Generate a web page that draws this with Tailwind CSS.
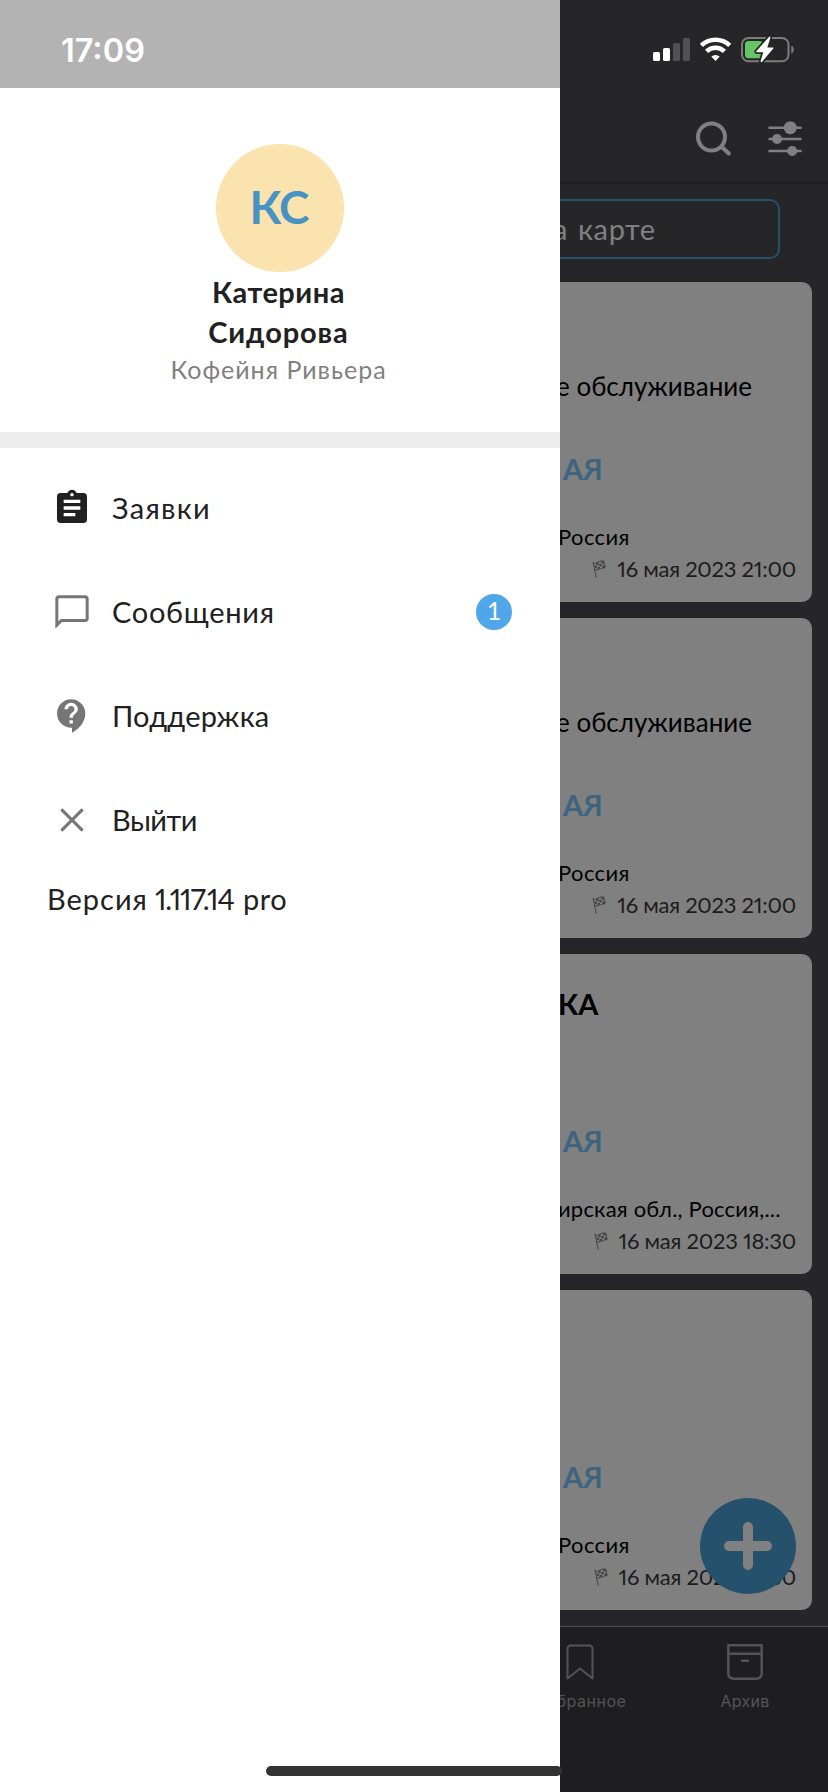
<!DOCTYPE html>
<html lang="ru">
<head>
<meta charset="utf-8">
<title>Меню</title>
<script src="https://cdn.jsdelivr.net/npm/@tailwindcss/browser@4"></script>
</head>
<body class="bg-[#262628]">
<svg class="hidden">
  <symbol id="flag" viewBox="0 0 14 18">
    <path d="M.9 1.6 4.3 17.4M1.2 3C4 4.6 7 .2 11.8 1l1.4 6.8C9 7.400 6 11.400 2.700 9.500" fill="none" stroke="#454545" stroke-width="1"/>
    <path d="M4 3.200l2.500-1 .5 2.200-2.500 1zM9 1.300l2.600-.1.5 2.200-2.500.1zM7 4.400l2.500-.9.5 2.200-2.500 1zM2.300 5.800l2.400-.5.5 2.200-2.300.6zM5.200 7.500l2.400-1 .4 1.800-2.500 1.200zM10 5.700l2.600-.1.5 2-2.600.1z" fill="#454545"/>
  </symbol>
</svg>
<div class="flex h-[1792px] w-[828px] overflow-hidden font-['Lato',sans-serif]">

  <!-- Drawer -->
  <aside class="flex w-[560px] shrink-0 flex-col bg-white text-[29px] text-[#212121]">
    <div class="flex h-[88px] items-center bg-[#b3b3b3] pt-3.5 pl-[61px] font-['Inter',sans-serif] text-[32.5px] font-semibold text-white">17:09</div>
    <div class="flex h-[344px] flex-col items-center pt-14">
      <div class="flex size-32 items-center justify-center rounded-full bg-[#fae3ae] pr-0.5 pb-[4px] text-[46px] font-bold tracking-[-1px] text-[#4893c4]">КС</div>
      <div class="pr-[3px] text-center leading-10 font-bold tracking-[0.5px]">Катерина<br><span class="tracking-[0.9px]">Сидорова</span></div>
      <div class="-mt-[3px] pr-[3px] text-[25px] leading-10 tracking-[1px] text-[#808080]">Кофейня Ривьера</div>
    </div>
    <div class="h-4 bg-[#ececec]"></div>
    <nav class="flex flex-col pt-2">
      <a class="flex h-[104px] items-center pl-[52px]">
        <svg class="size-10" viewBox="0 0 24 24" fill="#212121"><path d="M19 3h-4.180C14.400 1.840 13.300 1 12 1s-2.400.840-2.820 2H5c-1.100 0-2 .9-2 2v14c0 1.100.9 2 2 2h14c1.100 0 2-.9 2-2V5c0-1.100-.9-2-2-2zm-7 0c.550 0 1 .450 1 1s-.450 1-1 1-1-.450-1-1 .450-1 1-1zm2 14H7v-2h7v2zm3-4H7v-2h10v2zm0-4H7V7h10v2z"/></svg>
        <span class="ml-5 tracking-[1.3px]">Заявки</span>
      </a>
      <a class="flex h-[104px] items-center pr-12 pl-[52px]">
        <svg class="size-10" viewBox="0 0 24 24" fill="#767676"><path d="M20 2H4c-1.100 0-2 .9-2 2v18l4-4h14c1.100 0 2-.9 2-2V4c0-1.100-.9-2-2-2zm.2 14.200H5.300L3.800 17.700V4.400c0-.4.200-.6.600-.6h15.200c.4 0 .6.200.6.600z"/></svg>
        <span class="ml-5 tracking-[0.7px]">Сообщения</span>
        <span class="ml-auto flex size-9 items-center justify-center rounded-full bg-[#4fa6e8] pb-0.5 text-[25px] text-white">1</span>
      </a>
      <a class="flex h-[104px] items-center pl-[52px]">
        <svg class="size-10" viewBox="0 0 24 24" fill="#767676"><path d="M11.500 2C6.810 2 3 5.810 3 10.500S6.810 19 11.500 19h.5v3c4.860-2.340 8-7 8-11.500C20 5.810 16.190 2 11.500 2zm1 14.500h-2v-2h2v2zm0-3.500h-2c0-3.250 3-3 3-5 0-1.100-.9-2-2-2s-2 .9-2 2h-2c0-2.210 1.790-4 4-4s4 1.790 4 4c0 2.500-3 2.750-3 5z"/></svg>
        <span class="ml-5 tracking-[0.2px]">Поддержка</span>
      </a>
      <a class="flex h-[104px] items-center pl-[52px]">
        <svg class="size-10" viewBox="0 0 24 24" fill="none" stroke="#767676" stroke-width="1.800"><path d="M5.600 5.600 18.400 18.400M18.400 5.600 5.600 18.400"/></svg>
        <span class="ml-5 tracking-[-0.5px]">Выйти</span>
      </a>
    </nav>
    <div class="mt-[7px] flex pl-[47px] leading-10 whitespace-nowrap"><span class="tracking-[1px]">Версия</span><span class="ml-[7px] w-[82px] proportional-nums tracking-[-1.1px]">1.117.14</span><span class="ml-1.5 tracking-[0.5px]">pro</span></div>
    <div class="relative z-10 mt-auto mb-4 ml-[266px] h-2.5 w-[296px] shrink-0 rounded-full bg-[#333333]"></div>
  </aside>

  <!-- Dimmed application behind the drawer -->
  <main class="relative flex w-[268px] flex-col overflow-hidden text-black">
    <div class="flex h-[88px] shrink-0 pt-[36px] pl-[93px]">
      <svg class="h-[27px] w-[37px] shrink-0" viewBox="653 36 37 27"><g fill="#fff"><rect x="653" y="52" width="7" height="9" rx="1.500"/><rect x="663" y="48" width="7" height="13" rx="1.500"/></g><g fill="#515153"><rect x="673" y="43" width="7" height="18" rx="1.500"/><rect x="683" y="38" width="7" height="23" rx="1.500"/></g></svg>
      <svg class="ml-2.5 h-[27px] w-[32px] shrink-0" viewBox="700 36 32 27"><g fill="none" stroke="#fff" stroke-width="4.600"><path d="M701.300 45.400a20.500 20.500 0 0 1 28.400 0"/><path d="M706.600 51.400a12.800 12.800 0 0 1 17.800 0"/></g><path d="M715.500 61l-4.200-4.400a6.300 6.300 0 0 1 8.400 0z" fill="#fff"/></svg>
      <svg class="ml-[9px] h-[28px] w-[54px] shrink-0" viewBox="741 36 54 28"><rect x="742" y="38" width="46.500" height="23.300" rx="6.500" fill="none" stroke="#7c7c7d" stroke-width="2"/><rect x="745" y="41" width="18" height="17.300" rx="3.500" fill="#65c466"/><path d="M791.300 45.500c3.300 1.400 3.300 6.800 0 8.200z" fill="#7c7c7d"/><path d="M769.200 36.700 756.300 51.200c-.4.500-.2 1 .4 1h6.600l-2.700 8.700c-.3 1.200.7 1.700 1.500.8L773.300 48.600c.5-.6.200-1.200-.5-1.200h-5.500l3-9.500c.3-1.200-.4-1.900-1.100-1.200z" fill="#fff" stroke="#262628" stroke-width="3.500" paint-order="stroke"/></svg>
    </div>
    <header class="flex h-24 shrink-0 items-center border-b-2 border-[#1e1e20] pt-2 pl-[132px]">
      <svg class="size-[46px]" viewBox="692 116 46 46" fill="none" stroke="#808080" stroke-width="4"><circle cx="711.500" cy="137" r="13.500"/><path d="M722 147 728.800 153.500" stroke-linecap="round"/></svg>
      <svg class="ml-[30px] h-9 w-[34px]" viewBox="0 0 34 36"><path d="M1.500 6.700h31M1.500 18h31M1.500 30h31" stroke="#808080" stroke-width="2.500" stroke-linecap="round"/><g fill="#808080"><circle cx="22.300" cy="6.700" r="6.500"/><circle cx="9" cy="18" r="5"/><circle cx="24.200" cy="30" r="5"/></g></svg>
    </header>
    <div class="mt-[15px] mr-12 flex h-[60px] shrink-0 items-center rounded-r-[10px] border-2 border-l-0 border-[#25516f] text-[29px] tracking-[0.6px] text-[#808080]"><span class="-ml-[7px]">а</span><span class="ml-[10px]">карте</span></div>

    <div class="mt-[23px] flex flex-col gap-4 whitespace-nowrap proportional-nums">
      <article class="mr-4 flex h-80 flex-col rounded-r-[10px] bg-[#808080] pt-[84px] text-[22px]">
        <div class="-ml-1 h-10 text-[26px] leading-10">е обслуживание</div>
        <div class="mt-[43px] ml-[3px] h-10 text-[29px] leading-10 font-bold text-[#3e6480]">АЯ</div>
        <div class="mt-8 -ml-0.5 leading-8 tracking-[0.4px]">Россия</div>
        <div class="flex items-center justify-end pr-4 leading-8 tracking-[-0.25px] text-[#1c1c1c]"><svg class="mr-[11px] h-[18px] w-3.5"><use href="#flag"/></svg>16 мая 2023 21:00</div>
      </article>
      <article class="mr-4 flex h-80 flex-col rounded-r-[10px] bg-[#808080] pt-[84px] text-[22px]">
        <div class="-ml-1 h-10 text-[26px] leading-10">е обслуживание</div>
        <div class="mt-[43px] ml-[3px] h-10 text-[29px] leading-10 font-bold text-[#3e6480]">АЯ</div>
        <div class="mt-8 -ml-0.5 leading-8 tracking-[0.4px]">Россия</div>
        <div class="flex items-center justify-end pr-4 leading-8 tracking-[-0.25px] text-[#1c1c1c]"><svg class="mr-[11px] h-[18px] w-3.5"><use href="#flag"/></svg>16 мая 2023 21:00</div>
      </article>
      <article class="mr-4 flex h-80 flex-col rounded-r-[10px] bg-[#808080] pt-[30px] text-[22px]">
        <div class="-ml-0.5 h-10 text-[29px] leading-10 font-bold">КА</div>
        <div class="mt-[97px] ml-[3px] h-10 text-[29px] leading-10 font-bold text-[#3e6480]">АЯ</div>
        <div class="mt-8 -ml-0.5 leading-8 tracking-[0.2px]">ирская обл., Россия,...</div>
        <div class="flex items-center justify-end pr-4 leading-8 tracking-[-0.25px] text-[#1c1c1c]"><svg class="mr-[11px] h-[18px] w-3.5"><use href="#flag"/></svg>16 мая 2023 18:30</div>
      </article>
      <article class="mr-4 flex h-80 flex-col rounded-r-[10px] bg-[#808080] pt-[167px] text-[22px]">
        <div class="ml-[3px] h-10 text-[29px] leading-10 font-bold text-[#3e6480]">АЯ</div>
        <div class="mt-8 -ml-0.5 leading-8 tracking-[0.4px]">Россия</div>
        <div class="flex items-center justify-end pr-4 leading-8 tracking-[-0.25px] text-[#1c1c1c]"><svg class="mr-[11px] h-[18px] w-3.5"><use href="#flag"/></svg>16 мая 2023 18:30</div>
      </article>
    </div>

    <button class="absolute right-8 bottom-[198px] flex size-24 items-center justify-center rounded-full bg-[#25516d]">
      <svg class="size-12" viewBox="0 0 48 48"><path d="M24 5v38M5 24h38" stroke="#808080" stroke-width="10" stroke-linecap="round"/></svg>
    </button>

    <footer class="mt-4 -ml-16 flex h-[166px] w-[332px] shrink-0 border-t border-[#505051] bg-[#1e1e20] font-['Inter',sans-serif] text-[16px] text-[#545456]">
      <div class="flex w-[166px] flex-col items-center pt-[17px]">
        <svg class="ml-0.5 h-9 w-7" viewBox="0 0 28 36" fill="none" stroke="#545456" stroke-width="2"><path d="M1.500 34.500V5q0-3.500 3.500-3.500h18q3.500 0 3.500 3.500v29.500L14 24.500z" stroke-linejoin="round"/></svg>
        <span class="mt-[9px] ml-1 leading-6 tracking-[0.5px]">Избранное</span>
      </div>
      <div class="flex w-[166px] flex-col items-center pt-[17px]">
        <svg class="size-9" viewBox="0 0 36 36" fill="none" stroke="#545456" stroke-width="2.500"><path d="M1.300 1.300h33.400V29q0 5.700-5.700 5.700H7q-5.700 0-5.700-5.700zM1.300 9.700h33.400" stroke-linejoin="round"/><path d="M15 16.700h6" stroke-linecap="round"/></svg>
        <span class="mt-[9px] leading-6 tracking-[0.3px]">Архив</span>
      </div>
    </footer>
  </main>
</div>
</body>
</html>
